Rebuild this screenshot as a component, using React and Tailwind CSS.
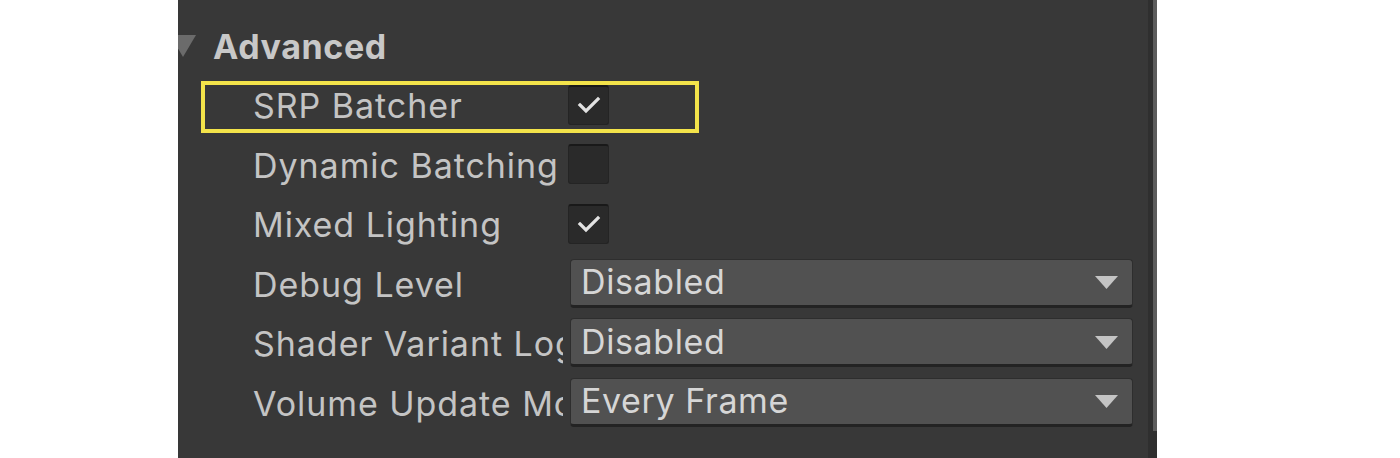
import React from "react";

const font = { fontFamily: "Inter, 'Noto Sans', sans-serif" };

function Check() {
  return (
    <svg width="24" height="20" viewBox="0 0 24 20" className="block">
      <polyline points="3,10 9,16 21,4" fill="none" stroke="#e2e2e2" strokeWidth="3.2" strokeLinecap="square" />
    </svg>
  );
}

function Checkbox({ checked }) {
  return (
    <div className="w-[41px] h-[40px] rounded-[3px] bg-[#2a2a2a] border border-[#242424] border-t-[#191919] border-t-2 flex items-center justify-center">
      {checked && <Check />}
    </div>
  );
}

function Dropdown({ value }) {
  return (
    <div className="w-[563px] h-[49px] rounded-[4px] bg-[#515151] border border-[#2e2e2e] border-b-[3px] border-b-[#232323] flex items-center justify-between pl-[10px] pr-[14px]">
      <span className="text-[34px] tracking-[0.6px] text-[#d6d6d6] leading-none">{value}</span>
      <svg width="23" height="13" viewBox="0 0 23 13" className="block mt-[1px]">
        <polygon points="0,0 23,0 11.5,13" fill="#c4c4c4" />
      </svg>
    </div>
  );
}

function Row({ label, children, highlight }) {
  return (
    <div className="relative h-[59.5px] flex items-center">
      {highlight && (
        <span className="absolute left-[23px] top-[6px] w-[498px] h-[52px] border-[4px] border-[#f3e34a] pointer-events-none" />
      )}
      <div className="w-[390px] pl-[75px] shrink-0">
        <div className="w-[310px] overflow-hidden whitespace-nowrap text-[34px] tracking-[0.95px] leading-[44px] text-[#c4c4c4] pt-[3px]">
          {label}
        </div>
      </div>
      <div className="shrink-0">{children}</div>
    </div>
  );
}

export default function App() {
  return (
    <div className="w-[1400px] h-[458px] bg-white flex" style={font}>
      <div className="w-[178px] shrink-0" />
      <div className="w-[979px] h-[458px] bg-[#383838] flex shrink-0 overflow-hidden">
        <div className="flex-1 pt-[17px]">
          <div className="h-[58px] flex items-center">
            <svg width="18" height="22" viewBox="0 0 18 22" className="block shrink-0">
              <polygon points="0,0 18,0 5,22 0,13.5" fill="#6b6b6b" />
            </svg>
            <span className="ml-[17px] text-[34px] tracking-[0.6px] font-bold text-[#c8c8c8] leading-none pt-[2px]">Advanced</span>
          </div>
          <Row label="SRP Batcher" highlight>
            <Checkbox checked />
          </Row>
          <Row label="Dynamic Batching">
            <Checkbox />
          </Row>
          <Row label="Mixed Lighting">
            <Checkbox checked />
          </Row>
          <Row label="Debug Level">
            <div className="ml-[2px]"><Dropdown value="Disabled" /></div>
          </Row>
          <Row label="Shader Variant Log Level">
            <div className="ml-[2px]"><Dropdown value="Disabled" /></div>
          </Row>
          <Row label="Volume Update Mode">
            <div className="ml-[2px]"><Dropdown value="Every Frame" /></div>
          </Row>
        </div>
        <div className="w-[5px] bg-[#2f2f2f] shrink-0" />
        <div className="w-[4px] shrink-0 flex flex-col bg-[#2f2f2f]">
          <div className="h-[431px] bg-[#5c5c5c]" />
        </div>
      </div>
    </div>
  );
}
